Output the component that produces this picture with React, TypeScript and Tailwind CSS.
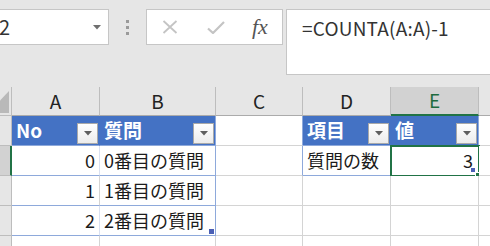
import type { ReactNode } from "react";

const font = { fontFamily: '"Noto Sans CJK JP", "Noto Sans", sans-serif' };

function FilterButton() {
  return (
    <div className="w-[21px] h-[21px] shrink-0 border border-[#a9a9a9] bg-gradient-to-b from-white to-[#ececec] flex items-center justify-center">
      <svg width="8" height="5" viewBox="0 0 8 5">
        <path d="M0 0 L8 0 L4 4.5 Z" fill="#5f5f5f" />
      </svg>
    </div>
  );
}

function Cell({ className = "", children }: { className?: string; children?: ReactNode }) {
  return (
    <div className={`relative flex items-center border-r border-b border-[#d4d4d4] bg-white text-[18px] text-[#1b1b1b] ${className}`}>
      {children}
    </div>
  );
}

function HeadCell({ label, right = false }: { label: string; right?: boolean }) {
  return (
    <div
      className={`flex items-end justify-between border-b border-[#8ea9db] bg-[#4472c4] pl-[4px] pr-[1px] pb-[1px] ${
        right ? "border-r border-r-[#8ea9db]" : "border-r border-r-[#4472c4]"
      }`}
    >
      <span className="self-center pb-[1px] text-[19px] font-bold text-white leading-none">{label}</span>
      <FilterButton />
    </div>
  );
}

function ColHead({ label, active = false }: { label: string; active?: boolean }) {
  return (
    <div
      className={`flex items-center justify-center border-r border-[#bdbdbd] text-[19px] ${
        active
          ? "bg-[#d2d2d2] text-[#1e6b3f] border-b-2 border-b-[#217346]"
          : "bg-[#e6e6e6] text-[#222] border-b border-b-[#ababab]"
      }`}
    >
      {label}
    </div>
  );
}

function RowHead({ active = false }: { active?: boolean }) {
  return (
    <div
      className={`border-b border-[#bdbdbd] ${
        active ? "bg-[#d2d2d2] border-r-2 border-r-[#217346]" : "bg-[#e6e6e6] border-r border-r-[#bdbdbd]"
      }`}
    />
  );
}

export default function App() {
  return (
    <div className="w-[490px] h-[246px] overflow-hidden bg-[#e6e6e6] select-none" style={font}>
      {/* formula bar area */}
      <div className="h-[87px] flex items-start pt-[9px]">
        <div className="w-[109px] h-[36px] shrink-0 border-y border-r border-[#c6c6c6] bg-white flex items-center justify-between pr-[7px]">
          <span className="text-[20px] text-[#333] leading-none -ml-[1px]">2</span>
          <svg width="8" height="5" viewBox="0 0 8 5">
            <path d="M0 0 L8 0 L4 4.5 Z" fill="#6f6f6f" />
          </svg>
        </div>
        <div className="w-[37px] h-[36px] shrink-0 flex flex-col items-center justify-center gap-[3px]">
          <div className="w-[3px] h-[3px] bg-[#9a9a9a]" />
          <div className="w-[3px] h-[3px] bg-[#9a9a9a]" />
          <div className="w-[3px] h-[3px] bg-[#9a9a9a]" />
        </div>
        <div className="w-[137px] h-[36px] shrink-0 border border-[#c6c6c6] bg-white flex items-center">
          <svg width="16" height="14" viewBox="0 0 16 14" className="ml-[15px]">
            <path d="M1.5 1 L14.5 13 M14.5 1 L1.5 13" stroke="#c4c4c4" strokeWidth="1.8" fill="none" />
          </svg>
          <svg width="18" height="13" viewBox="0 0 18 13" className="ml-[29px]">
            <path d="M1 7.5 L6 12 L17 1" stroke="#c4c4c4" strokeWidth="2.2" fill="none" />
          </svg>
          <span
            className="ml-[27px] text-[22px] italic text-[#555] leading-none"
            style={{ fontFamily: '"Liberation Serif", serif' }}
          >
            fx
          </span>
        </div>
        <div className="ml-[3px] h-[66px] flex-1 border-y border-l border-[#c6c6c6] bg-white pl-[15px] pt-[4px]">
          <span className="text-[19px] text-[#333] tracking-[0.2px]">=COUNTA(A:A)-1</span>
        </div>
      </div>

      {/* sheet grid */}
      <div className="grid grid-cols-[12px_88px_116px_87px_88px_88px_20px] grid-rows-[29px_30px_30px_30px_30px_30px]">
        {/* column headers */}
        <div className="relative border-r border-b border-[#bdbdbd] bg-[#e6e6e6] overflow-hidden">
          <svg width="12" height="29" viewBox="0 0 12 29" className="absolute left-0 top-0">
            <path d="M-12 26 L9 26 L9 4 Z" fill="#b9b9b9" />
          </svg>
        </div>
        <ColHead label="A" />
        <ColHead label="B" />
        <ColHead label="C" />
        <ColHead label="D" />
        <ColHead label="E" active />
        <ColHead label="" />

        {/* row 1 */}
        <RowHead />
        <HeadCell label="No" />
        <HeadCell label="質問" right />
        <Cell className="border-r-[#8ea9db]" />
        <HeadCell label="項目" />
        <HeadCell label="値" right />
        <Cell />

        {/* row 2 */}
        <RowHead active />
        <Cell className="justify-end pr-[4px] bg-[#d9e1f2] border-r-[#d9e1f2] border-b-[#8ea9db]">0</Cell>
        <Cell className="pl-[4px] bg-[#d9e1f2] border-r-[#8ea9db] border-b-[#8ea9db]">0番目の質問</Cell>
        <Cell className="border-r-[#8ea9db]" />
        <Cell className="pl-[4px] bg-[#d9e1f2] border-r-[#d9e1f2] border-b-[#8ea9db]">質問の数</Cell>
        <Cell className="justify-end pr-[5px] bg-[#d9e1f2] border-r-[#8ea9db] border-b-[#8ea9db]">
          3
          <div className="absolute -left-[1px] -top-[1px] -right-[2px] -bottom-[2px] border-2 border-[#217346]" />
          <div className="absolute right-[3px] bottom-[3px] w-[4px] h-[4px] bg-[#4a5fb5]" />
          <div className="absolute -right-[5px] -bottom-[5px] w-[8px] h-[8px] bg-[#217346] border border-white" />
        </Cell>
        <Cell />

        {/* row 3 */}
        <RowHead />
        <Cell className="justify-end pr-[4px] border-b-[#8ea9db]">1</Cell>
        <Cell className="pl-[4px] border-r-[#8ea9db] border-b-[#8ea9db]">1番目の質問</Cell>
        <Cell />
        <Cell />
        <Cell />
        <Cell />

        {/* row 4 */}
        <RowHead />
        <Cell className="justify-end pr-[4px] bg-[#d9e1f2] border-r-[#d9e1f2] border-b-[#8ea9db]">2</Cell>
        <Cell className="pl-[4px] bg-[#d9e1f2] border-r-[#8ea9db] border-b-[#8ea9db]">
          2番目の質問
          <div className="absolute right-[1px] bottom-[1px] w-[5px] h-[5px] bg-[#4a5fb5]" />
        </Cell>
        <Cell />
        <Cell />
        <Cell />
        <Cell />

        {/* rows 5-6 */}
        {[0, 1].map((r) => (
          <div key={r} className="contents">
            <RowHead />
            <Cell />
            <Cell />
            <Cell />
            <Cell />
            <Cell />
            <Cell />
          </div>
        ))}
      </div>
    </div>
  );
}
